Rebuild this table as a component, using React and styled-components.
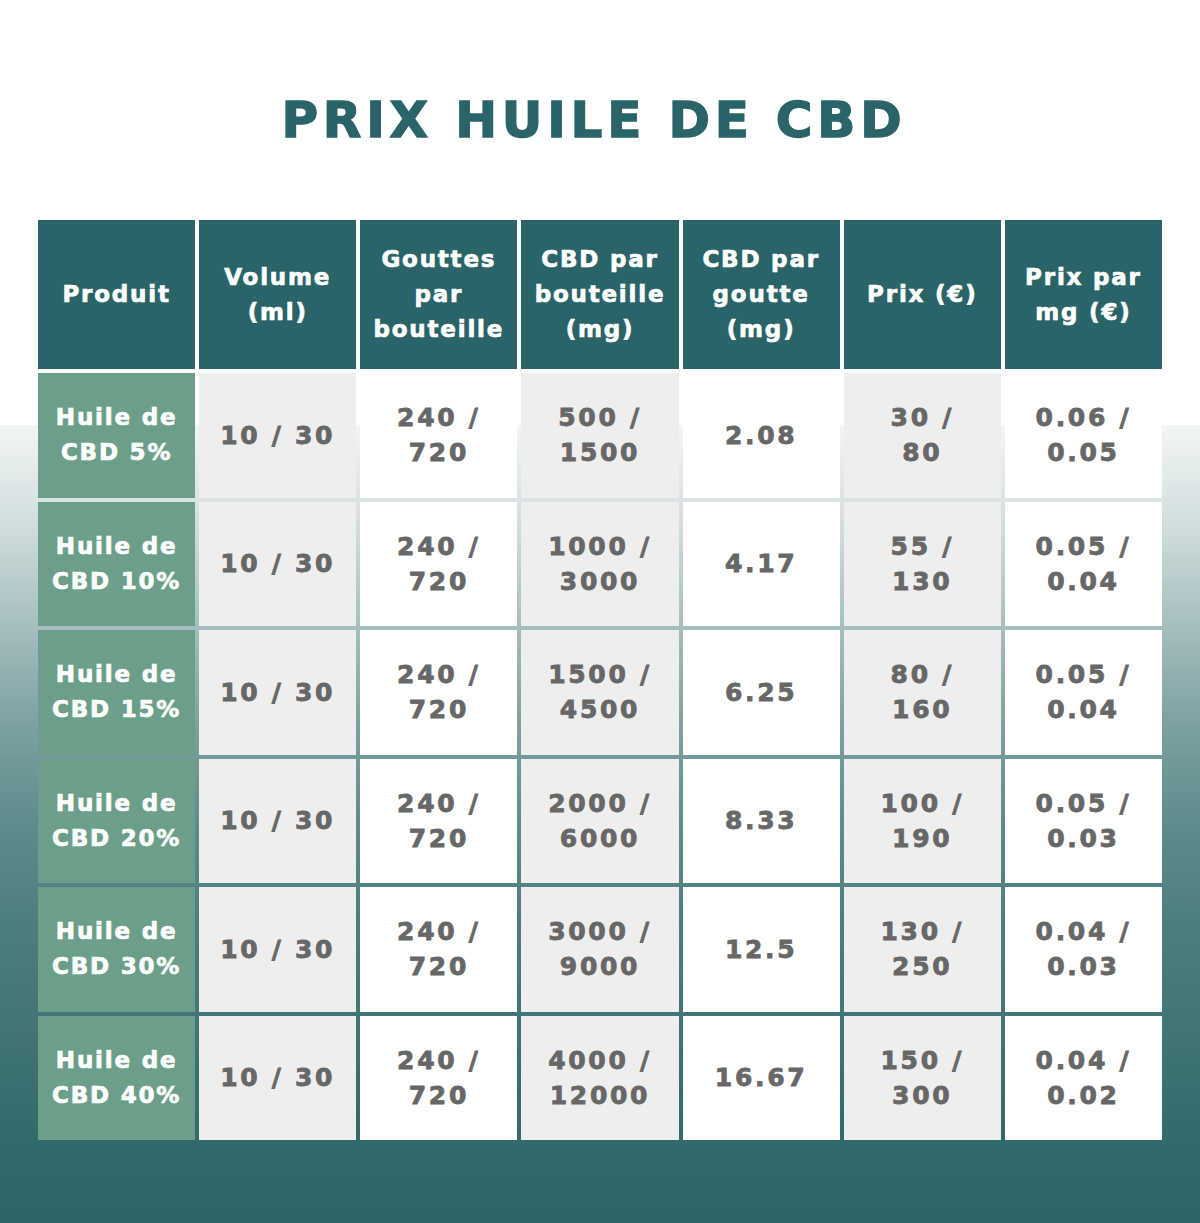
import React from "react";
import styled, { createGlobalStyle } from "styled-components";

const Global = createGlobalStyle`
  html, body { margin: 0; padding: 0; }
  body { font-family: "DejaVu Sans", "Liberation Sans", sans-serif; }
`;

const Page = styled.div`
  width: 1200px;
  height: 1223px;
  box-sizing: border-box;
  padding: 90px 38px 0;
  background: linear-gradient(
    to bottom,
    #ffffff 0px,
    #ffffff 425px,
    #f2f5f5 425px,
    #d3dfdf 520px,
    #a9c0c1 620px,
    #7fa2a3 720px,
    #5f8c8d 820px,
    #4d7e7f 920px,
    #427576 1020px,
    #336b6c 1130px,
    #2d6567 1223px
  );
  overflow: hidden;
`;

const Title = styled.h1`
  margin: 0 0 70px;
  padding-right: 12px;
  height: 60px;
  line-height: 60px;
  text-align: center;
  font-size: 50px;
  font-weight: 700;
  letter-spacing: 4.8px;
  color: #2a6468;
  -webkit-text-stroke: 1.4px #2a6468;
`;

const Table = styled.div`
  display: grid;
  grid-template-columns: repeat(7, 1fr);
  grid-template-rows: 149px repeat(6, 124.5px);
  gap: 4px;
`;

const Cell = styled.div`
  display: flex;
  align-items: center;
  justify-content: center;
  text-align: center;
  box-sizing: border-box;
  padding: 0 4px;
  line-height: 35px;
  font-weight: 700;
`;

const HeadCell = styled(Cell)`
  background: #2a6468;
  color: #ffffff;
  font-size: 23px;
  letter-spacing: 1.8px;
  -webkit-text-stroke: 0.7px #ffffff;
`;

const ProductCell = styled(Cell)`
  background: #6b9f89;
  color: #ffffff;
  font-size: 23px;
  letter-spacing: 1.8px;
  -webkit-text-stroke: 0.7px #ffffff;
`;

const DataCell = styled(Cell)`
  background: ${(p) => (p.$shade ? "#eeeeee" : "#ffffff")};
  color: #676767;
  font-size: 25px;
  letter-spacing: 2.7px;
  -webkit-text-stroke: 0.8px #676767;
`;

const headers = [
  ["Produit"],
  ["Volume", "(ml)"],
  ["Gouttes", "par", "bouteille"],
  ["CBD par", "bouteille", "(mg)"],
  ["CBD par", "goutte", "(mg)"],
  ["Prix (€)"],
  ["Prix par", "mg (€)"],
];

const rows = [
  { p: ["Huile de", "CBD 5%"], v: [["10 / 30"], ["240 /", "720"], ["500 /", "1500"], ["2.08"], ["30 /", "80"], ["0.06 /", "0.05"]] },
  { p: ["Huile de", "CBD 10%"], v: [["10 / 30"], ["240 /", "720"], ["1000 /", "3000"], ["4.17"], ["55 /", "130"], ["0.05 /", "0.04"]] },
  { p: ["Huile de", "CBD 15%"], v: [["10 / 30"], ["240 /", "720"], ["1500 /", "4500"], ["6.25"], ["80 /", "160"], ["0.05 /", "0.04"]] },
  { p: ["Huile de", "CBD 20%"], v: [["10 / 30"], ["240 /", "720"], ["2000 /", "6000"], ["8.33"], ["100 /", "190"], ["0.05 /", "0.03"]] },
  { p: ["Huile de", "CBD 30%"], v: [["10 / 30"], ["240 /", "720"], ["3000 /", "9000"], ["12.5"], ["130 /", "250"], ["0.04 /", "0.03"]] },
  { p: ["Huile de", "CBD 40%"], v: [["10 / 30"], ["240 /", "720"], ["4000 /", "12000"], ["16.67"], ["150 /", "300"], ["0.04 /", "0.02"]] },
];

const Lines = ({ lines }) => (
  <span>
    {lines.map((l, i) => (
      <React.Fragment key={i}>
        {i > 0 && <br />}
        {l}
      </React.Fragment>
    ))}
  </span>
);

export default function App() {
  return (
    <>
      <Global />
      <Page>
        <Title>PRIX HUILE DE CBD</Title>
        <Table>
          {headers.map((h, i) => (
            <HeadCell key={"h" + i}>
              <Lines lines={h} />
            </HeadCell>
          ))}
          {rows.map((r, ri) => (
            <React.Fragment key={ri}>
              <ProductCell>
                <Lines lines={r.p} />
              </ProductCell>
              {r.v.map((v, ci) => (
                <DataCell key={ci} $shade={ci % 2 === 0}>
                  <Lines lines={v} />
                </DataCell>
              ))}
            </React.Fragment>
          ))}
        </Table>
      </Page>
    </>
  );
}
